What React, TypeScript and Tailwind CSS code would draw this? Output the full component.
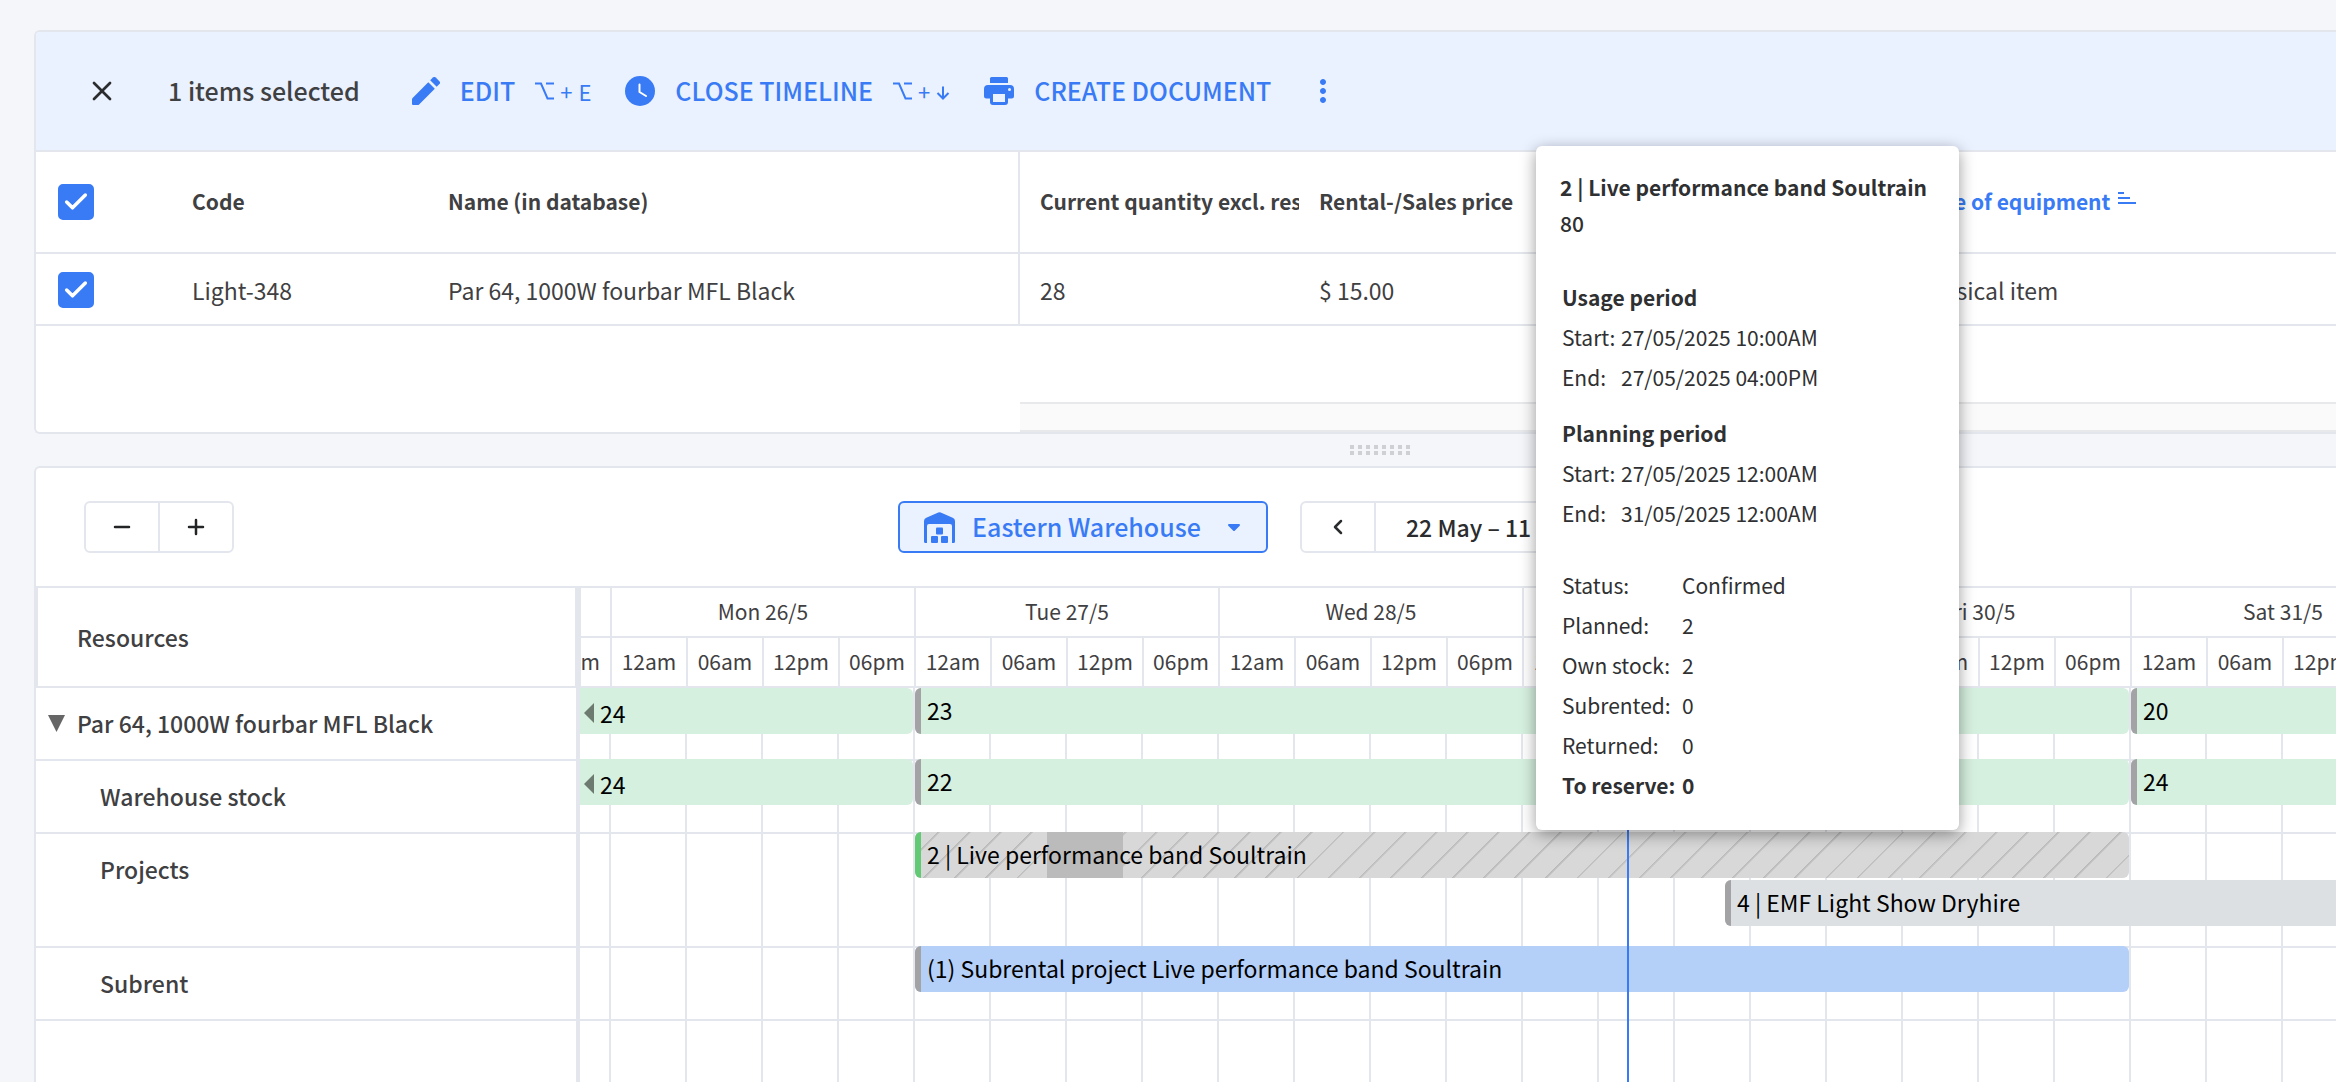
import type { ReactNode } from 'react';
import { MdMoreVert } from 'react-icons/md';
import { Check, ChevronLeft, ChevronRight, Minus, Plus, X } from 'lucide-react';
import clsx from 'clsx';

interface Bar {
    left: number;
    width?: number;
    label: string;
    color: string;
    edge?: string;
    continued?: boolean;
    lane?: number;
    usage?: { left: number; width: number };
}

interface ResourceRow {
    name: string;
    group?: boolean;
    height: string;
    line?: boolean;
    bars: Bar[];
}

const STOCK = 'bg-[#d6f0df]';
const GRAY_EDGE = 'bg-[#a3a3a5]';

const rows: ResourceRow[] = [
    {
        name: 'Par 64, 1000W fourbar MFL Black',
        group: true,
        height: 'h-[71px]',
        bars: [
            { left: 0, width: 333, label: '24', color: STOCK, continued: true },
            { left: 335, width: 1214, label: '23', color: STOCK, edge: GRAY_EDGE },
            { left: 1551, label: '20', color: STOCK, edge: GRAY_EDGE },
        ],
    },
    {
        name: 'Warehouse stock',
        height: 'h-[73px]',
        line: true,
        bars: [
            { left: 0, width: 333, label: '24', color: STOCK, continued: true },
            { left: 335, width: 1214, label: '22', color: STOCK, edge: GRAY_EDGE },
            { left: 1551, label: '24', color: STOCK, edge: GRAY_EDGE },
        ],
    },
    {
        name: 'Projects',
        height: 'h-[114px]',
        line: true,
        bars: [
            {
                left: 335,
                width: 1214,
                label: '2 | Live performance band Soultrain',
                color: 'bg-[#d8d8d8]',
                edge: 'bg-[#62c975]',
                usage: { left: 132, width: 76 },
            },
            {
                left: 1145,
                label: '4 | EMF Light Show Dryhire',
                color: 'bg-[#dce0e3]',
                edge: GRAY_EDGE,
                lane: 1,
            },
        ],
    },
    {
        name: 'Subrent',
        height: 'h-[73px]',
        line: true,
        bars: [
            {
                left: 335,
                width: 1214,
                label: '(1) Subrental project Live performance band Soultrain',
                color: 'bg-[#b4cff8]',
                edge: GRAY_EDGE,
            },
        ],
    },
];

const days = ['Mon 26/5', 'Tue 27/5', 'Wed 28/5', 'Thu 29/5', 'Fri 30/5', 'Sat 31/5'];
const hours = ['12am', '06am', '12pm', '06pm'];

const usagePeriods = [
    { title: 'Usage period', start: '27/05/2025 10:00AM', end: '27/05/2025 04:00PM' },
    { title: 'Planning period', start: '27/05/2025 12:00AM', end: '31/05/2025 12:00AM' },
];

const quantities = [
    ['Status:', 'Confirmed'],
    ['Planned:', '2'],
    ['Own stock:', '2'],
    ['Subrented:', '0'],
    ['Returned:', '0'],
];

function PencilIcon() {
    return (
        <svg viewBox="0 0 28 28" className="h-7 w-7" fill="currentColor" aria-hidden="true">
            <path d="M0 22.300a2 2 0 0 1 .6-1.400L16.300 5.200l6.500 6.500L7.100 27.400a2 2 0 0 1-1.400.6H1a1 1 0 0 1-1-1z" />
            <path d="M18.200 3.300 20.900.6a2 2 0 0 1 2.800 0l3.700 3.700a2 2 0 0 1 0 2.800l-2.700 2.700z" />
        </svg>
    );
}

function ClockIcon() {
    return (
        <svg viewBox="0 0 30 30" className="h-[30px] w-[30px]" aria-hidden="true">
            <circle cx="15" cy="15" r="15" fill="currentColor" />
            <path
                d="M14.500 8.500V16l6.500 4"
                fill="none"
                stroke="white"
                strokeWidth="2"
                strokeLinecap="round"
                strokeLinejoin="round"
            />
        </svg>
    );
}

function PrinterIcon() {
    return (
        <svg viewBox="0 0 30 28" className="h-7 w-[30px]" fill="currentColor" aria-hidden="true">
            <path d="M7.500 0h15A1.500 1.500 0 0 1 24 1.500V6H6V1.500A1.500 1.500 0 0 1 7.500 0z" />
            <path
                fillRule="evenodd"
                d="M4 8h22a4 4 0 0 1 4 4v7a2.500 2.500 0 0 1-2.500 2.500H24V25a3 3 0 0 1-3 3H9a3 3 0 0 1-3-3V21.500H2.500A2.500 2.500 0 0 1 0 19v-7a4 4 0 0 1 4-4zm5 9v8h12v-8zM25.500 11a1.500 1.500 0 1 0 0 3 1.500 1.500 0 0 0 0-3z"
            />
        </svg>
    );
}

function WarehouseIcon() {
    return (
        <svg viewBox="0 0 31 31" className="h-[31px] w-[31px]" fill="currentColor" aria-hidden="true">
            <path d="M14.300.4a3 3 0 0 1 2.400 0l12 5.300A3.500 3.500 0 0 1 31 9v20.500a1.500 1.500 0 0 1-1.500 1.500H28V14a2 2 0 0 0-2-2H5a2 2 0 0 0-2 2v17H1.500A1.500 1.500 0 0 1 0 29.500V9a3.500 3.500 0 0 1 2.300-3.300z" />
            <rect x="12" y="15.500" width="7" height="7" rx="1" />
            <rect x="7" y="24" width="7" height="7" rx="1" />
            <rect x="17" y="24" width="7" height="7" rx="1" />
        </svg>
    );
}

function SortIcon() {
    return (
        <svg viewBox="0 0 18 12" className="mb-2 h-3 w-[18px]" fill="currentColor" aria-hidden="true">
            <rect width="6" height="2" />
            <rect y="5" width="12" height="2" />
            <rect y="10" width="18" height="2" />
        </svg>
    );
}

function OptionKey() {
    return (
        <svg viewBox="0 0 19 18" className="h-[18px] w-[19px]" fill="none" stroke="currentColor" strokeWidth="2" aria-hidden="true">
            <path d="M0 1.500h6l6.500 15H19M11 1.500h8" />
        </svg>
    );
}

function ArrowDownKey() {
    return (
        <svg viewBox="0 0 14 14" className="mt-1 h-3.5 w-3.5" fill="none" stroke="currentColor" strokeWidth="2" aria-hidden="true">
            <path d="M7 .5v12M1.500 7 7 12.500 12.500 7" />
        </svg>
    );
}

function ToolbarButton({ icon, label, shortcut }: { icon: ReactNode; label: string; shortcut?: ReactNode }) {
    return (
        <button type="button" className="flex items-center gap-5 text-[25px] font-medium text-[#397af5]">
            {icon}
            {label}
            {shortcut && (
                <span className="flex items-center gap-1.5 text-[22px] font-normal">
                    <OptionKey />
                    <span>+</span>
                    {shortcut}
                </span>
            )}
        </button>
    );
}

function Checkbox({ label }: { label: string }) {
    return (
        <label className="relative block h-9 w-9">
            <input
                type="checkbox"
                defaultChecked
                aria-label={label}
                className="peer block h-9 w-9 appearance-none rounded-[5px] border-2 border-[#397af5] checked:bg-[#397af5]"
            />
            <Check
                className="pointer-events-none absolute inset-1 hidden h-7 w-7 text-white peer-checked:block"
                strokeWidth={3}
            />
        </label>
    );
}

function TimelineBar({ bar }: { bar: Bar }) {
    return (
        <div
            className={clsx(
                'absolute flex h-[46px] items-center overflow-hidden text-[23px] text-black',
                bar.color,
                bar.lane ? 'top-12' : 'top-0',
                bar.continued ? 'pt-1' : 'rounded-l-md',
                bar.width ? 'rounded-r-md' : 'right-0'
            )}
            style={{ left: bar.left, width: bar.width }}
        >
            {bar.usage && (
                <>
                    <div className="absolute inset-0 bg-[repeating-linear-gradient(135deg,transparent_0px,transparent_16px,#b8b8b8_16px,#cccccc_18px,transparent_18px,transparent_22px)]" />
                    <div
                        className="absolute inset-y-0 bg-[#bbbbbb]"
                        style={{ left: bar.usage.left, width: bar.usage.width }}
                    />
                </>
            )}
            {bar.edge && <div className={clsx('relative h-full w-1.5 shrink-0', bar.edge)} />}
            {bar.continued && (
                <svg viewBox="0 0 10 20" className="ml-1 h-5 w-2.5" fill="#6d7a70" aria-hidden="true">
                    <path d="M10 0v20L0 10z" />
                </svg>
            )}
            <span className={clsx('relative ml-1.5 whitespace-nowrap', !bar.continued && 'pb-0.5')}>{bar.label}</span>
        </div>
    );
}

function EquipmentPanel() {
    return (
        <section className="overflow-hidden rounded-l-md border-y-2 border-l-2 border-[#e3e6ec] bg-white">
            <div className="flex h-[120px] items-center border-b-2 border-[#e3e6ec] bg-[#eaf1ff]">
                <button type="button" aria-label="Clear selection" className="ml-[50px] text-[#2b2c2e]">
                    <X className="h-8 w-8" strokeWidth={2} />
                </button>
                <span className="ml-[50px] text-[25px] font-medium text-[#3f4042]">1 items selected</span>
                <div className="ml-[52px] flex items-center gap-[34px]">
                    <ToolbarButton icon={<PencilIcon />} label="EDIT" shortcut="E" />
                    <ToolbarButton icon={<ClockIcon />} label="CLOSE TIMELINE" shortcut={<ArrowDownKey />} />
                    <ToolbarButton icon={<PrinterIcon />} label="CREATE DOCUMENT" />
                    <button type="button" aria-label="More actions" className="text-[#397af5]">
                        <MdMoreVert className="h-9 w-9" />
                    </button>
                </div>
            </div>
            <table className="w-full table-fixed border-separate border-spacing-0 text-left text-[#3f4042]">
                <colgroup>
                    <col className="w-[136px]" />
                    <col className="w-[256px]" />
                    <col className="w-[592px]" />
                    <col className="w-[279px]" />
                    <col className="w-[279px]" />
                    <col className="w-[318px]" />
                    <col />
                </colgroup>
                <thead>
                    <tr className="text-[21px] whitespace-nowrap *:h-[102px] *:border-b-2 *:border-[#e3e6ec]">
                        <th className="pl-[22px]">
                            <Checkbox label="Select all" />
                        </th>
                        <th className="pl-5 font-bold">Code</th>
                        <th className="border-r-2 pl-5 font-bold">Name (in database)</th>
                        <th className="pl-5 font-bold">
                            <div className="overflow-hidden">Current quantity excl. reserved</div>
                        </th>
                        <th className="pl-5 font-bold">Rental-/Sales price</th>
                        <th />
                        <th className="pl-5 font-bold text-[#397af5]">
                            <span className="flex items-center gap-2">
                                Type of equipment
                                <SortIcon />
                            </span>
                        </th>
                    </tr>
                </thead>
                <tbody>
                    <tr className="text-[23px] whitespace-nowrap *:h-[72px] *:border-b-2 *:border-[#e3e6ec] *:pt-0.5">
                        <td className="pl-[22px]">
                            <Checkbox label="Select Light-348" />
                        </td>
                        <td className="pl-5">Light-348</td>
                        <td className="border-r-2 pl-5">Par 64, 1000W fourbar MFL Black</td>
                        <td className="pl-5">28</td>
                        <td className="pl-5">$ 15.00</td>
                        <td />
                        <td className="pl-5">Physical item</td>
                    </tr>
                </tbody>
            </table>
            <div className="mt-[76px] ml-[984px] h-[30px] border-t-2 border-b-2 border-[#e8e9ea] bg-[#fafafa]" />
        </section>
    );
}

function TimelineToolbar() {
    return (
        <div className="flex h-[120px] items-center border-b-2 border-[#e3e6ec]">
            <div className="ml-12 flex h-[52px] divide-x-2 divide-[#e3e6ec] rounded-md border-2 border-[#e3e6ec] text-[#232426]">
                <button type="button" aria-label="Zoom out" className="flex w-[74px] items-center justify-center">
                    <Minus className="h-6 w-6" strokeWidth={2.5} />
                </button>
                <button type="button" aria-label="Zoom in" className="flex w-[72px] items-center justify-center">
                    <Plus className="h-6 w-6" strokeWidth={2.5} />
                </button>
            </div>
            <div className="relative ml-[664px] text-[#397af5]">
                <span className="pointer-events-none absolute inset-y-0 left-[26px] flex items-center">
                    <WarehouseIcon />
                </span>
                <select
                    aria-label="Warehouse"
                    className="block h-[52px] w-[370px] appearance-none rounded-md border-2 border-[#397af5] bg-[#eaf1ff] pl-[72px] text-[25px] font-medium"
                >
                    <option>Eastern Warehouse</option>
                </select>
                <svg
                    viewBox="0 0 12 7"
                    className="pointer-events-none absolute inset-y-0 right-7 my-auto h-[7px] w-3"
                    fill="currentColor"
                    aria-hidden="true"
                >
                    <path d="M1 0h10a1 1 0 0 1 .7 1.700l-5 5a1 1 0 0 1-1.400 0l-5-5A1 1 0 0 1 1 0z" />
                </svg>
            </div>
            <div className="ml-8 flex h-[52px] divide-x-2 divide-[#e3e6ec] rounded-md border-2 border-[#e3e6ec] text-[#2b2c2e]">
                <button type="button" aria-label="Previous period" className="flex w-[74px] items-center justify-center">
                    <ChevronLeft className="h-6 w-6" strokeWidth={2.5} />
                </button>
                <button type="button" className="px-[30px] text-[23px] font-medium whitespace-nowrap">
                    22 May – 11 Jun
                </button>
                <button type="button" aria-label="Next period" className="flex w-[74px] items-center justify-center">
                    <ChevronRight className="h-6 w-6" strokeWidth={2.5} />
                </button>
            </div>
        </div>
    );
}

function TimelineHeader() {
    return (
        <div className="flex h-[100px] border-b-2 border-[#e3e6ec] text-[#3f4042]">
            <div className="flex w-[545px] shrink-0 items-center border-r-6 border-l-2 border-[#e3e6ec] pl-[39px] text-[23px] font-medium">
                Resources
            </div>
            <div className="flex min-w-0 flex-1 overflow-hidden text-[21px]">
                <div className="w-[31px] shrink-0 overflow-hidden border-r-2 border-[#e3e6ec]">
                    <div className="h-[50px] border-b-2 border-[#e3e6ec]" />
                    <div className="flex h-12 items-center justify-end pr-2.5">06pm</div>
                </div>
                {days.map((day) => (
                    <div key={day} className="w-[304px] shrink-0">
                        <div className="flex h-[50px] items-center justify-center border-r-2 border-b-2 border-[#e3e6ec]">
                            {day}
                        </div>
                        <div className="grid h-12 grid-cols-4">
                            {hours.map((hour) => (
                                <div
                                    key={hour}
                                    className="flex items-center justify-center border-r-2 border-[#e3e6ec]"
                                >
                                    {hour}
                                </div>
                            ))}
                        </div>
                    </div>
                ))}
            </div>
        </div>
    );
}

function TimelinePanel() {
    return (
        <section className="flex flex-1 flex-col rounded-tl-md border-t-2 border-l-2 border-[#e3e6ec] bg-white">
            <TimelineToolbar />
            <TimelineHeader />
            <div className="flex flex-1">
                <div className="flex w-[544px] shrink-0 flex-col border-r-4 border-[#e3e6ec] text-[23px] font-medium text-[#3f4042]">
                    {rows.map((row) => (
                        <div
                            key={row.name}
                            className={clsx(
                                'flex border-[#e3e6ec]',
                                row.height,
                                row.line && 'border-t-2',
                                row.group ? 'pl-3' : 'pl-16'
                            )}
                        >
                            <div className="flex h-[71px] items-center">
                                {row.group && (
                                    <button type="button" aria-label="Collapse group" className="mr-3">
                                        <svg viewBox="0 0 17 17" className="h-[17px] w-[17px]" fill="#666">
                                            <path d="M0 0h17L8.500 17z" />
                                        </svg>
                                    </button>
                                )}
                                {row.name}
                            </div>
                        </div>
                    ))}
                    <div className="flex-1 border-t-2 border-[#e3e6ec]" />
                </div>
                <div className="relative flex min-w-0 flex-1 flex-col overflow-hidden bg-[linear-gradient(to_right,#e3e6ec_2px,transparent_2px)] bg-[length:76px_100%] bg-[position:29px_0]">
                    {rows.map((row) => (
                        <div key={row.name} className={clsx('relative', row.height)}>
                            {row.line && <div className="h-0.5 bg-[#e3e6ec]" />}
                            {row.bars.map((bar) => (
                                <TimelineBar key={bar.left} bar={bar} />
                            ))}
                        </div>
                    ))}
                    <div className="flex-1 border-t-2 border-[#e3e6ec]" />
                    {/* current time */}
                    <div className="absolute inset-y-0 left-[1047px] w-0.5 bg-[#397af5]" />
                </div>
            </div>
        </section>
    );
}

function ProjectTooltip() {
    return (
        <div
            role="tooltip"
            className="absolute top-[146px] left-[1536px] w-[423px] rounded-md bg-white px-6 pt-[23px] pb-[25px] text-[21px] leading-10 whitespace-nowrap text-[#2f3032] shadow-[0_4px_16px_rgba(0,0,0,0.4)]"
        >
            <p className="leading-9 font-bold">2 | Live performance band Soultrain</p>
            <p className="leading-9 font-medium">80</p>
            <div className="mt-9 flex flex-col gap-4 pl-0.5">
                {usagePeriods.map((period) => (
                    <dl key={period.title} className="grid grid-cols-[59px_1fr]">
                        <dt className="col-span-2 font-bold">{period.title}</dt>
                        <dt>Start:</dt>
                        <dd>{period.start}</dd>
                        <dt>End:</dt>
                        <dd>{period.end}</dd>
                    </dl>
                ))}
            </div>
            <dl className="mt-8 grid grid-cols-[120px_1fr] pl-0.5">
                {quantities.map(([label, value]) => (
                    <div key={label} className="col-span-2 grid grid-cols-subgrid">
                        <dt>{label}</dt>
                        <dd>{value}</dd>
                    </div>
                ))}
                <dt className="font-bold">To reserve:</dt>
                <dd className="font-bold">0</dd>
            </dl>
        </div>
    );
}

export default function App() {
    return (
        <main className="relative flex min-h-screen flex-col overflow-hidden bg-[#f4f6fa] pt-[30px] pl-[34px] font-['Noto_Sans_CJK_SC',sans-serif]">
            <EquipmentPanel />
            <div className="flex h-8 shrink-0 items-center">
                <div className="ml-[1316px] grid grid-cols-8 gap-x-1 gap-y-0.5">
                    {Array.from({ length: 16 }, (_, i) => (
                        <span key={i} className="h-1 w-1 bg-[#cfd0d3]" />
                    ))}
                </div>
            </div>
            <TimelinePanel />
            <ProjectTooltip />
        </main>
    );
}
